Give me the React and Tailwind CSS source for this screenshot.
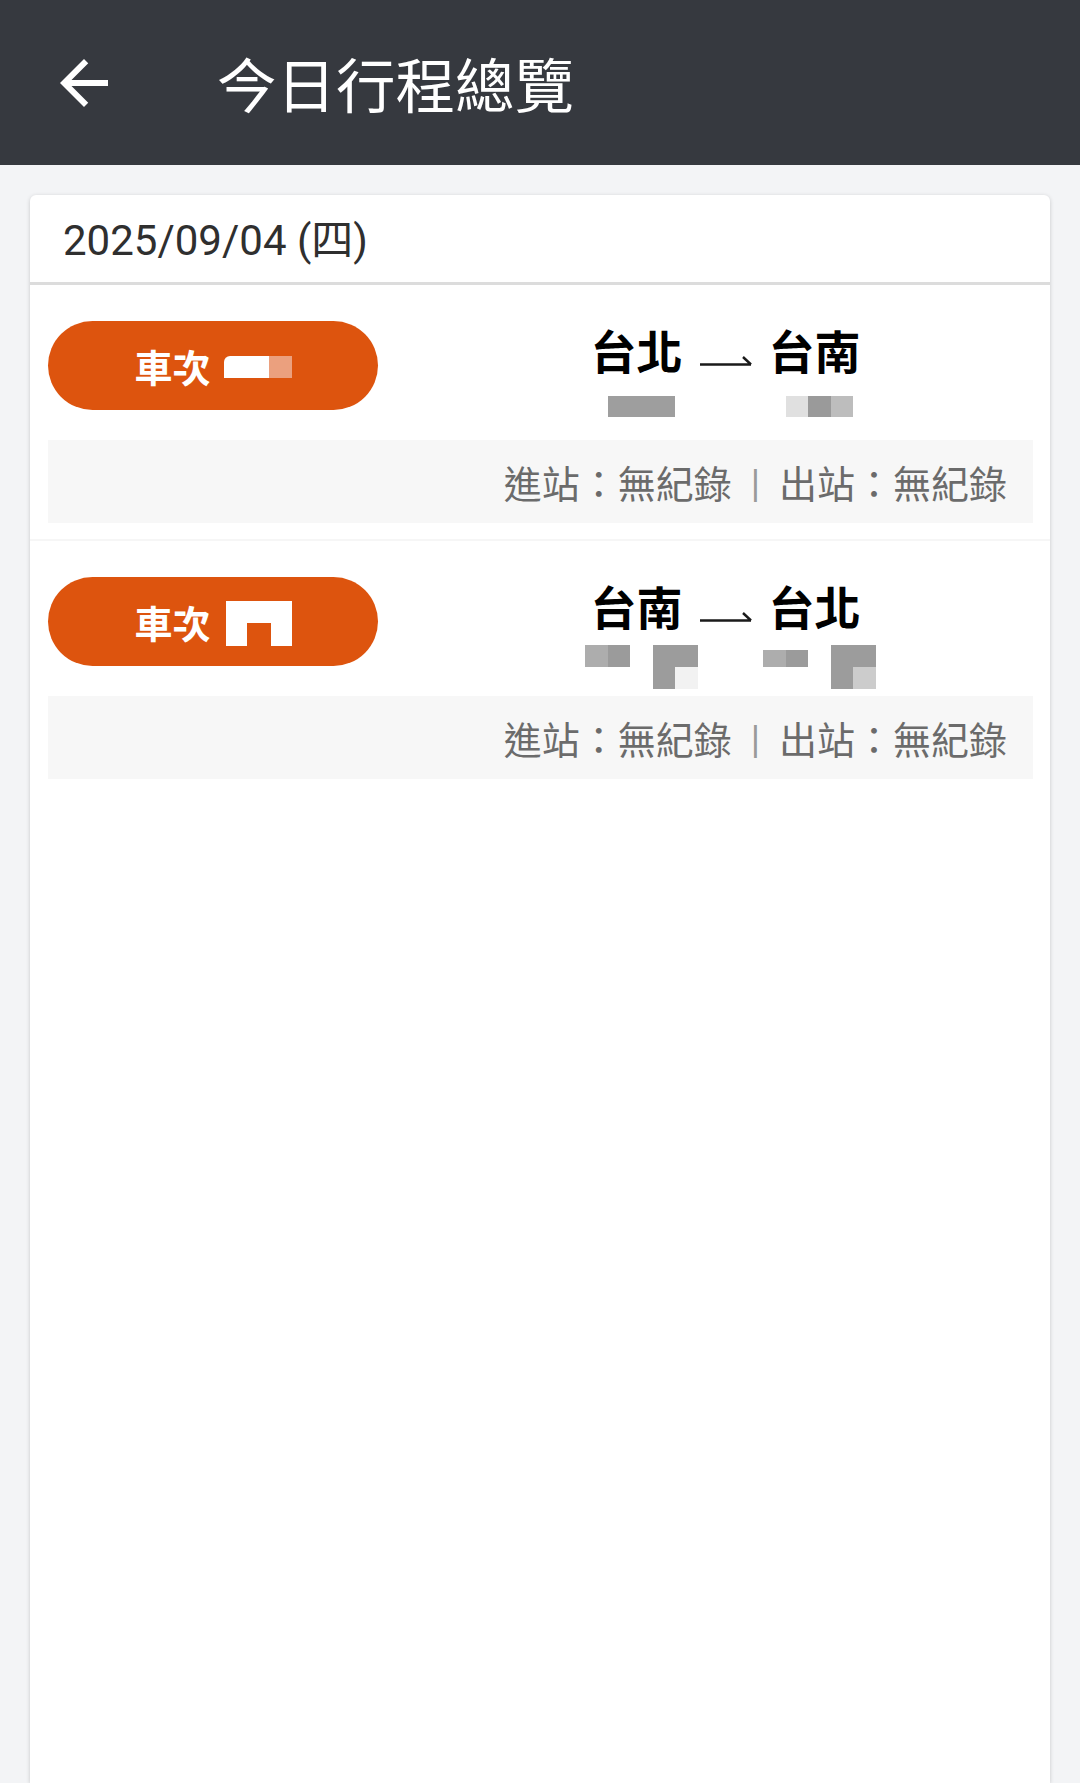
const trips = [
  { id: 1, from: "台北", to: "台南", badge: "a" },
  { id: 2, from: "台南", to: "台北", badge: "b" },
];

function BackArrow() {
  return (
    <svg width="72" height="72" viewBox="0 0 24 24" fill="white">
      <path d="M20 11H7.83l5.59-5.59L12 4l-8 8 8 8 1.41-1.41L7.83 13H20v-2z" />
    </svg>
  );
}

function RouteArrow() {
  return (
    <svg width="54" height="14" viewBox="0 0 54 14" className="mx-[16px] mt-[26px] shrink-0">
      <path d="M1 12.5H52M44 5l8 7.5" stroke="#1a1a1a" strokeWidth="2.4" fill="none" />
    </svg>
  );
}

// redacted train numbers, kept as flat blocks
function BadgeMask({ kind }) {
  if (kind === "a") {
    return (
      <div className="flex h-[22px] ml-[13px] mt-[2px]">
        <div className="w-[45px] h-full bg-white rounded-tl-[6px]" />
        <div className="w-[23px] h-full bg-[#eba07e]" />
      </div>
    );
  }
  return (
    <div className="flex flex-col w-[66px] h-[45px] ml-[15px] mt-[4px]">
      <div className="h-[22px] bg-white" />
      <div className="flex h-[23px]">
        <div className="w-[21px] bg-white" />
        <div className="w-[24px]" />
        <div className="w-[21px] bg-white" />
      </div>
    </div>
  );
}

function CodeMask({ kind, side }) {
  if (kind === "a") {
    if (side === "from") {
      return <div className="w-[67px] h-[21px] bg-[#9e9e9e] ml-[10px]" />;
    }
    return (
      <div className="flex h-[21px] ml-[10px]">
        <div className="w-[22px] bg-[#e0e0e0]" />
        <div className="w-[23px] bg-[#9a9a9a]" />
        <div className="w-[22px] bg-[#bdbdbd]" />
      </div>
    );
  }
  return (
    <div className="flex gap-[23px] ml-[10px] -mt-[7px] shrink-0">
      <div className={`flex ${side === "to" ? "mt-[5px] h-[17px]" : "h-[22px]"}`}>
        <div className="w-[23px] bg-[#adadad]" />
        <div className="w-[22px] bg-[#9b9b9b]" />
      </div>
      <div className="flex flex-col w-[45px] h-[44px]">
        <div className="h-[22px] bg-[#9c9c9c]" />
        <div className="flex h-[22px]">
          <div className="w-[22px] bg-[#9c9c9c]" />
          <div className={`w-[23px] ${side === "to" ? "bg-[#cccccc]" : "bg-[#f2f2f2]"}`} />
        </div>
      </div>
    </div>
  );
}

function Station({ name, kind, side }) {
  return (
    <div className="w-[92px] shrink-0 flex flex-col items-center">
      <span className="text-[46px] leading-[46px] font-bold text-black whitespace-nowrap">{name}</span>
      <div className="mt-[24px] w-[92px] flex justify-center">
        <CodeMask kind={kind} side={side} />
      </div>
    </div>
  );
}

function TripCard({ trip }) {
  return (
    <div className="bg-white pt-[36px] pb-[16px] pl-[18px] pr-[17px]">
      <div className="flex h-[89px]">
        <div className="w-[330px] h-[89px] shrink-0 rounded-full bg-[#dd540e] flex items-center justify-center">
          <span className="text-white text-[38px] font-bold leading-none font-['Noto_Sans_CJK_TC',sans-serif]">
            車次
          </span>
          <BadgeMask kind={trip.badge} />
        </div>
        <div className="flex-1 flex justify-center pl-[40px] pt-[5px] font-['Noto_Sans_CJK_TC',sans-serif]">
          <Station name={trip.from} kind={trip.badge} side="from" />
          <RouteArrow />
          <Station name={trip.to} kind={trip.badge} side="to" />
        </div>
      </div>
      <div className="mt-[30px] h-[83px] bg-[#f7f7f7] flex items-center justify-end pr-[26px] text-[38px] text-[#6b6b6b] font-['Noto_Sans_CJK_TC',sans-serif]">
        <span>進站：無紀錄</span>
        <span className="mx-[19px] mt-[6px] text-[38px] text-[#9a9a9a] font-['Roboto',sans-serif]">|</span>
        <span>出站：無紀錄</span>
      </div>
    </div>
  );
}

export default function App() {
  return (
    <div className="w-[1080px] h-[1783px] overflow-hidden bg-[#f3f4f6] flex flex-col">
      <header className="h-[165px] shrink-0 bg-[#36393f] flex items-center pl-[48px]">
        <BackArrow />
        <h1 className="ml-[97px] text-white text-[59.5px] font-normal leading-none font-['Noto_Sans_CJK_TC',sans-serif]">
          今日行程總覽
        </h1>
      </header>

      <main className="flex-1 flex flex-col px-[30px] pt-[30px]">
        <div className="flex-1 flex flex-col bg-white rounded-t-[6px] shadow-[0_1px_4px_rgba(0,0,0,0.18)]">
          <div className="h-[90px] shrink-0 flex items-center pl-[33px] pt-[3px] border-b-[3px] border-[#dcdcdc] font-['Roboto','Noto_Sans_CJK_TC',sans-serif] text-[42px] text-[#2f2f2f]">
            2025/09/04 (四)
          </div>
          <div className="flex flex-col gap-[2px] bg-[#f6f6f6]">
            {trips.map((t) => (
              <TripCard key={t.id} trip={t} />
            ))}
          </div>
          <div className="flex-1 mt-[2px] bg-white" />
        </div>
      </main>
    </div>
  );
}
